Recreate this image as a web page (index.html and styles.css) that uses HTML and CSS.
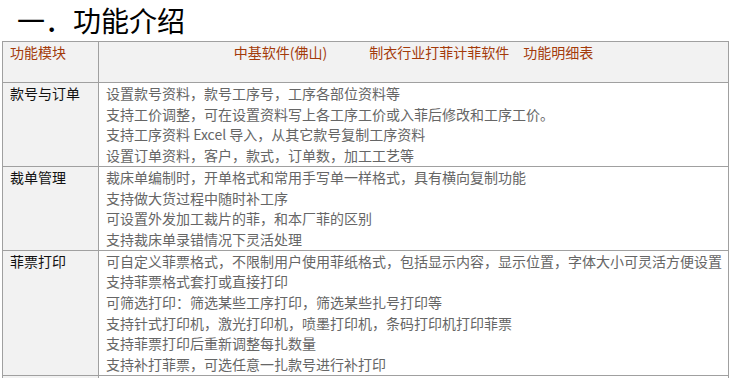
FILE: index.html
```html
<!DOCTYPE html>
<html lang="zh">
<head>
<meta charset="utf-8">
<link rel="stylesheet" href="styles.css">
</head>
<body>
<h1 class="title">一．功能介绍</h1>
<table class="spec">
  <tr class="head">
    <td class="c-mod">功能模块</td>
    <td class="c-desc head-desc">中基软件(佛山)&#12288;&#12288;&#12288;制衣行业打菲计菲软件&#12288;功能明细表</td>
  </tr>
  <tr>
    <td class="c-mod">款号与订单</td>
    <td class="c-desc">
      <div class="ln">设置款号资料，款号工序号，工序各部位资料等</div>
      <div class="ln">支持工价调整，可在设置资料写上各工序工价或入菲后修改和工序工价。</div>
      <div class="ln">支持工序资料 Excel 导入，从其它款号复制工序资料</div>
      <div class="ln">设置订单资料，客户，款式，订单数，加工工艺等</div>
    </td>
  </tr>
  <tr>
    <td class="c-mod">裁单管理</td>
    <td class="c-desc">
      <div class="ln">裁床单编制时，开单格式和常用手写单一样格式，具有横向复制功能</div>
      <div class="ln">支持做大货过程中随时补工序</div>
      <div class="ln">可设置外发加工裁片的菲，和本厂菲的区别</div>
      <div class="ln">支持裁床单录错情况下灵活处理</div>
    </td>
  </tr>
  <tr>
    <td class="c-mod">菲票打印</td>
    <td class="c-desc">
      <div class="ln">可自定义菲票格式，不限制用户使用菲纸格式，包括显示内容，显示位置，字体大小可灵活方便设置</div>
      <div class="ln">支持菲票格式套打或直接打印</div>
      <div class="ln">可筛选打印：筛选某些工序打印，筛选某些扎号打印等</div>
      <div class="ln">支持针式打印机，激光打印机，喷墨打印机，条码打印机打印菲票</div>
      <div class="ln">支持菲票打印后重新调整每扎数量</div>
      <div class="ln">支持补打菲票，可选任意一扎款号进行补打印</div>
    </td>
  </tr>
  <tr class="more">
    <td class="c-mod"></td>
    <td class="c-desc"></td>
  </tr>
</table>
</body>
</html>
```

FILE: styles.css
```css
html, body {
  margin: 0;
  padding: 0;
  background: #ffffff;
  overflow: hidden;
}
body {
  font-family: "Noto Sans CJK SC", "Noto Sans", sans-serif;
  color: #000;
}
.title {
  margin: 0;
  padding: 3px 0 0 17px;
  height: 41px;
  box-sizing: border-box;
  font-size: 28px;
  line-height: 34px;
  font-weight: normal;
  color: #000;
}
.spec {
  margin-left: 2px;
  border-collapse: collapse;
  width: 727px;
  table-layout: fixed;
}
.spec td {
  border: 1px solid #a0a0a0;
  vertical-align: top;
  padding: 0 4px 0 7px;
  font-size: 14px;
  line-height: 20.7px;
}
.spec .c-mod {
  width: 96px;
  box-sizing: border-box;
  background: #f2f2f2;
  color: #111;
}
.spec .c-desc {
  color: #666;
  background: #fff;
}
.spec .head td {
  height: 41px;
  box-sizing: border-box;
  background: #f2f2f2;
  color: #a33a0a;
}
.spec .head .head-desc {
  text-align: center;
  padding-left: 0;
  padding-right: 0;
}
.spec .more td {
  height: 40px;
}
.ln {
  white-space: nowrap;
}
```
